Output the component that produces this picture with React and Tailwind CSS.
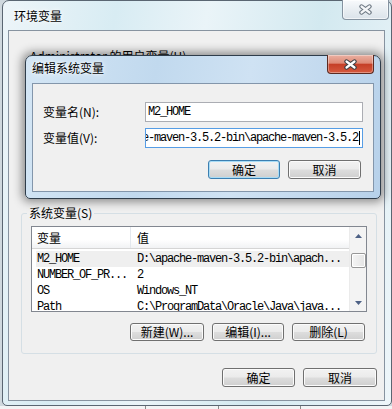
import clsx from "clsx";

// win7 style push button
const Btn = ({ children, className, focus }) => (
  <div
    className={clsx(
      "flex h-full items-center justify-center rounded-[3px] border bg-[linear-gradient(#f2f2f2_0%,#ebebeb_48%,#dddddd_52%,#cfcfcf_100%)] text-[12px] leading-none",
      focus
        ? "border-[#3c7fb1] shadow-[inset_0_0_0_1px_#a8dcf6]"
        : "border-[#707070] shadow-[inset_0_0_0_1px_#fbfbfb]",
      className
    )}
  >
    {children}
  </div>
);

const CloseGlyph = ({ outline, fill }) => (
  <svg width="15" height="11" viewBox="0 0 15 11">
    <path d="M3.5 2.5 L11.5 8.5 M11.5 2.5 L3.5 8.5" stroke={outline} strokeWidth="4.4" strokeLinecap="round" fill="none" />
    <path d="M3.5 2.5 L11.5 8.5 M11.5 2.5 L3.5 8.5" stroke={fill} strokeWidth="2.2" strokeLinecap="round" fill="none" />
  </svg>
);

const rows = [
  ["M2_HOME", "D:\\apache-maven-3.5.2-bin\\apach..."],
  ["NUMBER_OF_PR...", "2"],
  ["OS", "Windows_NT"],
  ["Path", "C:\\ProgramData\\Oracle\\Java\\java..."],
];

const Arrow = ({ down }) => (
  <svg width="7" height="4" viewBox="0 0 7 4">
    <path d={down ? "M0 0 L7 0 L3.5 4 Z" : "M0 4 L7 4 L3.5 0 Z"} fill="#4d6185" />
  </svg>
);

const SystemVars = () => (
  <fieldset className="ml-[12px] mt-[143px] w-[356px] rounded-[3px] border border-[#d5dfe5]">
    <legend className="ml-[5px] px-[2px] leading-[14px]">系统变量(S)</legend>
    <div className="ml-[9px] mt-[6px] flex h-[86px] w-[336px] overflow-hidden border border-[#828790] bg-white">
      <div className="flex flex-1 flex-col overflow-hidden">
        {/* header */}
        <div className="flex h-[22px] shrink-0 items-center border-b border-[#d5d5d5] bg-[linear-gradient(#ffffff_0%,#ffffff_60%,#f1f2f4_100%)]">
          <div className="flex h-full w-[99px] items-center border-r border-[#e3e8ee] pl-[5px]">变量</div>
          <div className="pl-[6px]">值</div>
        </div>
        <div className="mt-[2px] pl-[4px] [font-family:'Liberation_Mono','Noto_Sans_CJK_SC',monospace] text-[12px] leading-[16px] tracking-[-1.2px]">
          {rows.map((r, i) => (
            <div key={r[0]} className={clsx("flex h-[16px] whitespace-pre", i === 0 && "bg-[#efefef]")}>
              <div className="w-[95px] pl-[1px]">{r[0]}</div>
              <div className="pl-[6px]">{r[1]}</div>
            </div>
          ))}
        </div>
      </div>
      {/* scrollbar */}
      <div className="flex w-[17px] flex-col border-l border-[#ebebeb] bg-[#f3f3f3]">
        <div className="flex h-[17px] items-center justify-center"><Arrow /></div>
        <div className="flex-1">
          <div className="mx-auto mt-[9px] h-[15px] w-[15px] rounded-[2px] border border-[#979797] bg-[linear-gradient(90deg,#f5f5f5,#e4e4e4)] shadow-[inset_0_0_0_1px_#ffffff]" />
        </div>
        <div className="flex h-[17px] items-center justify-center"><Arrow down /></div>
      </div>
    </div>
    <div className="mr-[11px] mt-[11px] mb-[12px] flex h-[18px] justify-end gap-[8px]">
      <Btn className="w-[74px]">新建(W)...</Btn>
      <Btn className="w-[72px]">编辑(I)...</Btn>
      <Btn className="w-[73px]">删除(L)</Btn>
    </div>
  </fieldset>
);

const EditDialog = () => (
  <div className="absolute left-[25px] top-[55px] flex h-[144px] w-[356px] flex-col rounded-t-[7px] rounded-b-[5px] border border-[#2f3d4b] bg-[linear-gradient(100deg,#d4e6f5_0%,#c1d9ee_35%,#cfe2f3_60%,#b7d1ea_100%)] px-[6px] pb-[6px] shadow-[0_0_10px_3px_rgba(0,0,0,0.42)]">
    <div className="flex h-[27px] items-start justify-between">
      <div className="pt-[5px] leading-[14px] [text-shadow:0_0_6px_#ffffff,0_0_3px_#ffffff]">编辑系统变量</div>
      <div className="-mt-[1px] flex h-[19px] w-[47px] items-center justify-center rounded-b-[4px] border border-t-0 border-[#5b2a21] bg-[linear-gradient(#eab0a2_0%,#de8a76_45%,#c53f27_52%,#d65a3f_100%)] shadow-[inset_0_0_0_1px_rgba(255,255,255,0.35)]">
        <CloseGlyph outline="#3b3f44" fill="#ffffff" />
      </div>
    </div>
    <div className="flex h-[109px] flex-col border border-[#8396ab] bg-[#f0f0f0]">
      <div className="mt-[18px] flex h-[20px] items-center">
        <div className="pl-[10px]">变量名(N):</div>
        <div className="ml-auto mr-[10px] flex h-full w-[218px] items-center border border-[#abadb3] bg-white pl-[2px] [font-family:'Liberation_Mono',monospace] text-[12px] tracking-[-1.2px]">
          M2_HOME
        </div>
      </div>
      <div className="mt-[6px] flex h-[20px] items-center">
        <div className="pl-[10px]">变量值(V):</div>
        <div className="ml-auto mr-[10px] flex h-full w-[218px] items-center justify-end overflow-hidden border border-[#569de5] bg-white pr-[2px] [font-family:'Liberation_Mono',monospace] text-[12px] tracking-[-1.2px]">
          <span className="whitespace-pre">D:\apache-maven-3.5.2-bin\apache-maven-3.5.2</span>
          <span className="ml-[1px] h-[14px] w-[1px] shrink-0 bg-black" />
        </div>
      </div>
      <div className="mr-[12px] mt-[12px] flex h-[19px] justify-end gap-[8px]">
        <Btn focus className="w-[72px]">确定</Btn>
        <Btn className="w-[73px]">取消</Btn>
      </div>
    </div>
  </div>
);

export default function App() {
  return (
    <div className="relative h-[409px] w-[392px] overflow-hidden bg-[#cfd8de] text-[12px] leading-[14px] text-black [font-family:'Noto_Sans_CJK_SC','Noto_Sans',sans-serif]">
      {/* 环境变量 window */}
      <div className="ml-[2px] flex h-[406px] w-[390px] flex-col rounded-t-[7px] rounded-b-[5px] border border-[#5a6672] bg-[linear-gradient(100deg,#edf5f9_0%,#d8ecf3_25%,#eaf4f8_45%,#d3e9f0_70%,#eef6fa_100%)] pb-[4px] pl-[5px] pr-[6px]">
        <div className="-mr-[4px] flex h-[29px] items-start justify-between">
          <div className="pl-[6px] pt-[8px] [text-shadow:0_0_6px_#ffffff,0_0_3px_#ffffff]">环境变量</div>
          <div className="-mt-[1px] flex h-[20px] w-[47px] items-center justify-center rounded-b-[4px] border border-t-0 border-[#8593a0] bg-[linear-gradient(#f8fafc_0%,#e9eef2_50%,#dbe3ea_100%)] shadow-[inset_0_0_0_1px_rgba(255,255,255,0.6)]">
            <CloseGlyph outline="#6b7681" fill="#f4f6f8" />
          </div>
        </div>
        <div className="flex h-[371px] flex-col border border-[#8793a0] bg-[#f0f0f0]">
          <div className="ml-[21px] mt-[18px] h-[14px]">Administrator 的用户变量(U)</div>
          <SystemVars />
          <div className="mr-[7px] mt-[14px] flex h-[19px] justify-end gap-[8px]">
            <Btn className="w-[73px]">确定</Btn>
            <Btn className="w-[74px]">取消</Btn>
          </div>
        </div>
      </div>
      <div className="flex h-[3px] bg-[#f2f4f5]">
        <div className="w-[145px]" />
        <div className="w-[73px] border-l border-[#8a8a8a]" />
        <div className="w-[82px] border-l border-[#8a8a8a]" />
        <div className="border-l border-[#8a8a8a]" />
      </div>
      <EditDialog />
    </div>
  );
}
